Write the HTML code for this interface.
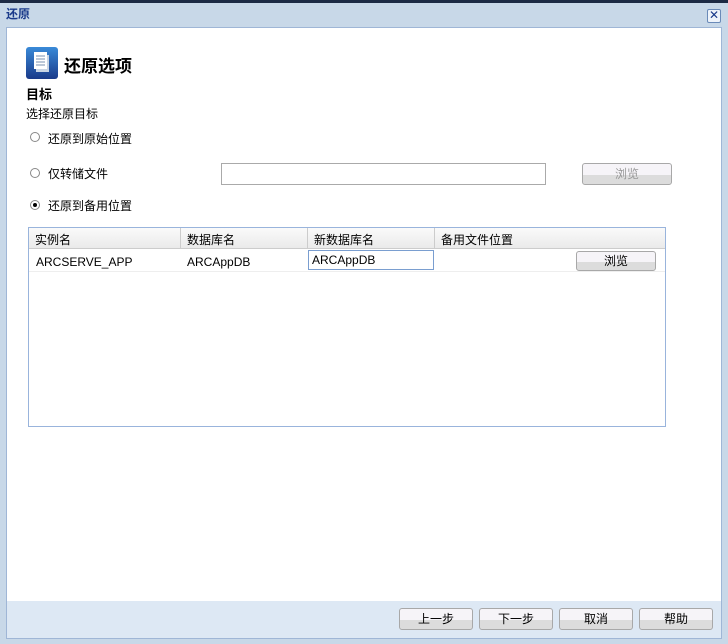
<!DOCTYPE html><html><head><meta charset="utf-8"><style>
*{margin:0;padding:0;box-sizing:border-box}
body{width:728px;height:644px;background:#c8d8e8;font-family:"Liberation Sans","Noto Sans CJK SC",sans-serif;font-size:12px;color:#000;position:relative;overflow:hidden}
.top{position:absolute;left:0;top:0;width:728px;height:3px;background:#1c2a44}
.title{position:absolute;left:6px;top:5px;font-weight:bold;color:#1a3a8a;font-size:12px}
.x{position:absolute;left:707px;top:9px;width:14px;height:14px;border:1px solid #6a8ab8;background:#eef3fa;border-radius:2px;color:#1a3a8a;font-size:12px;line-height:11px;text-align:center}
.win{position:absolute;left:6px;top:27px;width:716px;height:612px;border:1px solid #9fb6d6;background:#fff}
.foot{position:absolute;left:6px;top:601px;width:716px;height:38px;background:#dde8f4;border:1px solid #9fb6d6;border-top:none}
.abs{position:absolute}
.radio{position:absolute;width:10px;height:10px;border:1px solid #888;border-radius:50%;background:#fff}
.btn{position:absolute;height:22px;border:1px solid #a8a8a8;border-radius:3px;background:linear-gradient(#f6f4f8 55%,#dcdcdc 55%);text-align:center;line-height:20px;font-size:12px}
.grid{position:absolute;left:28px;top:227px;width:638px;height:200px;border:1px solid #99b4dc;background:#fff}
.hd{position:absolute;top:0;height:21px;background:linear-gradient(#fafafa,#eaeaea);border-right:1px solid #ccc;border-bottom:1px solid #ccc;padding:3px 0 0 6px}
</style></head><body>
<div class="top"></div>
<div class="title">还原</div>
<div class="x">✕</div>
<div class="win"></div>
<div class="foot"></div>
<svg class="abs" style="left:26px;top:47px" width="32" height="32"><defs><linearGradient id="g" x1="0" y1="0" x2="0" y2="1"><stop offset="0" stop-color="#3a8ad8"/><stop offset="1" stop-color="#1a3a8a"/></linearGradient></defs><rect width="32" height="32" rx="3" fill="url(#g)"/><rect x="10" y="8" width="13" height="17" fill="#c8d4e4"/><rect x="8" y="5" width="13" height="17" fill="#fff"/><g stroke="#7890b0" stroke-width="1"><line x1="10" y1="9" x2="19" y2="9"/><line x1="10" y1="12" x2="19" y2="12"/><line x1="10" y1="15" x2="19" y2="15"/><line x1="10" y1="18" x2="19" y2="18"/></g></svg>
<div class="abs" style="left:64px;top:52px;font-size:17px;font-weight:bold">还原选项</div>
<div class="abs" style="left:26px;top:84px;font-size:13px;font-weight:bold">目标</div>
<div class="abs" style="left:26px;top:105px">选择还原目标</div>
<div class="radio" style="left:30px;top:132px"></div><div class="abs" style="left:48px;top:130px">还原到原始位置</div>
<div class="radio" style="left:30px;top:168px"></div><div class="abs" style="left:48px;top:165px">仅转储文件</div>
<div class="abs" style="left:221px;top:163px;width:325px;height:22px;border:1px solid #aaa;background:#fff"></div>
<div class="btn" style="left:582px;top:163px;width:90px;color:#999">浏览</div>
<div class="radio" style="left:30px;top:200px"><div style="width:4px;height:4px;background:#000;border-radius:50%;margin:2px"></div></div><div class="abs" style="left:48px;top:197px">还原到备用位置</div>
<div class="grid">
<div class="hd" style="left:0;width:152px">实例名</div>
<div class="hd" style="left:152px;width:127px">数据库名</div>
<div class="hd" style="left:279px;width:127px">新数据库名</div>
<div class="hd" style="left:406px;width:230px;border-right:none">备用文件位置</div>
<div class="abs" style="left:7px;top:27px">ARCSERVE_APP</div>
<div class="abs" style="left:158px;top:27px">ARCAppDB</div>
<div class="abs" style="left:279px;top:22px;width:126px;height:20px;border:1px solid #7a9ed0;padding:2px 0 0 3px">ARCAppDB</div>
<div class="btn" style="left:547px;top:23px;width:80px;height:20px;line-height:18px">浏览</div>
<div class="abs" style="left:0;top:43px;width:636px;border-top:1px solid #eee"></div>
</div>
<div class="btn" style="left:399px;top:608px;width:74px">上一步</div>
<div class="btn" style="left:479px;top:608px;width:74px">下一步</div>
<div class="btn" style="left:559px;top:608px;width:74px">取消</div>
<div class="btn" style="left:639px;top:608px;width:74px">帮助</div>
</body></html>
